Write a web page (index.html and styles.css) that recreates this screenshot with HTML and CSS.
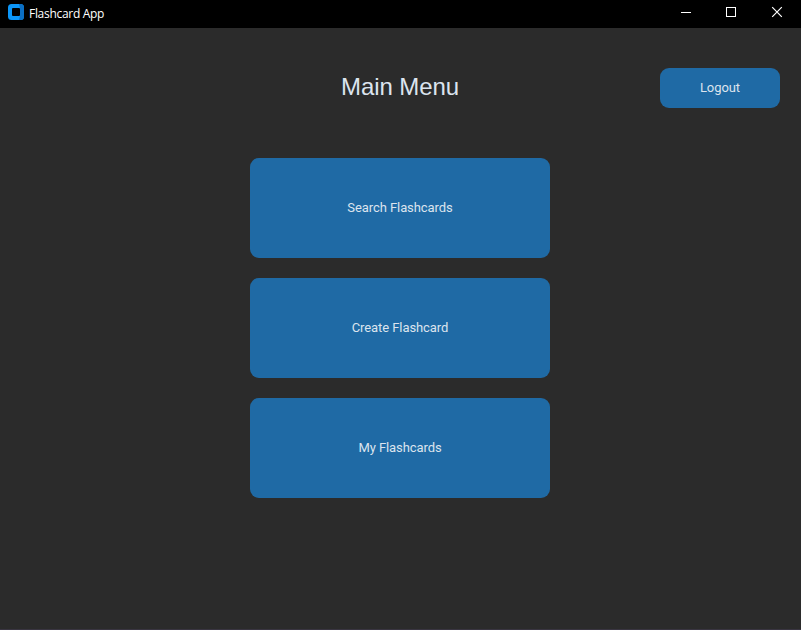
FILE: index.html
```html
<!DOCTYPE html>
<html lang="en">
<head>
<meta charset="utf-8">
<title>Flashcard App</title>
<link rel="stylesheet" href="styles.css">
</head>
<body>
<div class="titlebar">
  <svg class="logo" width="16" height="16" viewBox="0 0 16 16"><rect width="16" height="16" rx="3.500" fill="#0c96f8"/><path d="M11 0h1.500A3.500 3.500 0 0 1 16 3.500v9a3.500 3.500 0 0 1-3.500 3.500H11l1-4V4z" fill="#0b6fc4"/><rect x="4" y="4" width="8" height="8" rx="1" fill="#000"/></svg>
  <span class="title">Flashcard App</span>
  <div class="controls">
    <svg width="46" height="28" viewBox="0 0 46 28"><path d="M18 12.500h10" stroke="#fff"/></svg>
    <svg width="46" height="28" viewBox="0 0 46 28"><rect x="17.500" y="7.500" width="9" height="9" fill="none" stroke="#fff"/></svg>
    <svg width="46" height="28" viewBox="0 0 46 28"><path d="M17.200 7.200l9.600 9.600M26.800 7.200l-9.600 9.600" stroke="#fff" stroke-width="1.200"/></svg>
  </div>
</div>
<main class="content">
  <header class="header">
    <h1 class="heading">Main Menu</h1>
    <button class="btn logout">Logout</button>
  </header>
  <nav class="menu">
    <button class="btn card">Search Flashcards</button>
    <button class="btn card">Create Flashcard</button>
    <button class="btn card">My Flashcards</button>
  </nav>
</main>
</body>
</html>
```
FILE: styles.css
```css
* { box-sizing: border-box; }
body { margin: 0; height: 630px; overflow: hidden; background: #2b2b2b; border-bottom: 1px solid #393541; font-family: Roboto, sans-serif; }
.titlebar { height: 28px; display: flex; background: #000; color: #fff; }
.logo { margin: 4px 5px 0 8px; }
.title { font: 12px/27px "Open Sans", sans-serif; letter-spacing: -0.3px; }
.controls { display: flex; margin-left: auto; }
.content { padding: 40px 21px 0 0; }
.header { display: grid; grid-template-columns: 120px 1fr 120px; align-items: center; height: 40px; padding-left: 20px; }
.heading { grid-column: 2; margin: 0; padding-bottom: 2px; text-align: center; font: 24px/28px "Liberation Sans", sans-serif; letter-spacing: -0.1px; color: #dce4ee; }
.btn { display: block; border: 0; padding: 0; border-radius: 9px; background: #1f6aa5; color: #dce4ee; font: 13px/16px Roboto, sans-serif; letter-spacing: -0.08px; }
.logout { width: 120px; height: 40px; }
.menu { display: flex; flex-direction: column; gap: 20px; width: 300px; margin: 50px 0 0 250px; }
.card { width: 300px; height: 100px; }
```
